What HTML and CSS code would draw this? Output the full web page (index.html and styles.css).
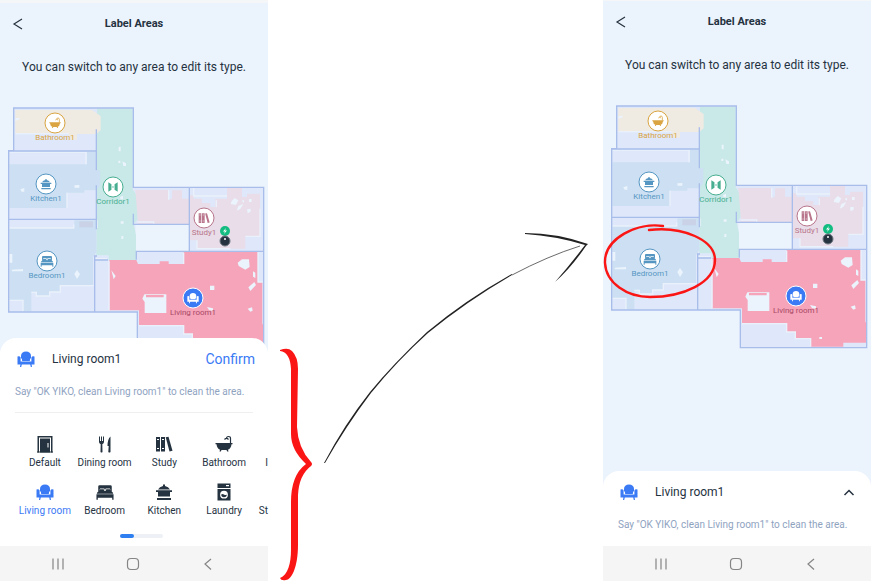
FILE: index.html
```html
<!DOCTYPE html>
<html lang="en">
<head>
  <meta charset="UTF-8">
  <meta name="viewport" content="width=device-width, initial-scale=1.0">
  <title>Label Areas</title>
  <link rel="stylesheet" href="styles.css">
</head>
<body>
  <!-- shared icons -->
  <svg class="sprite" width="0" height="0" aria-hidden="true">
    <symbol id="sofa" viewBox="0 0 18 18">
      <path d="M4 8V6C4 3 6 1.500 9 1.500S14 3 14 6V8Q12.800 8.500 12.800 11H5.200Q5.200 8.500 4 8z"/>
      <path d="M.5 6.500Q2.800 5.500 3.600 7.500V11.500H14.400V7.500Q15.200 5.500 17.500 6.500V14.500H14.600L15 17H13.800L13.200 14.500H4.800L4.200 17H3L3.400 14.500H.5z"/>
    </symbol>
    <symbol id="door" viewBox="0 0 18 18">
      <path d="M1.500 1H16.500V17.500H15V2.500H3V17.500H1.500z"/>
      <path fill-rule="evenodd" d="M4 3.500H14V17.500H4zM11.500 8V12.500H12.500V8z"/>
      <path d="M1 16.500H17V17.500H1z"/>
    </symbol>
    <symbol id="cutlery" viewBox="0 0 18 18">
      <path d="M3 1.500H4V6H5V1.500H6V6H7V1.500H8V7Q8 8.500 6.300 9.200L6.500 17Q5.500 18 4.500 17L4.700 9.200Q3 8.500 3 7z"/>
      <path d="M14.500 1.500V17Q13.500 18 12.300 17L12.700 11H11.500Q11.500 4 14.500 1.500z"/>
    </symbol>
    <symbol id="books" viewBox="0 0 18 18">
      <path fill-rule="evenodd" d="M1 2H5V16.500H1zM2 4V5H4V4zM2 13V14H4V13z"/>
      <path fill-rule="evenodd" d="M6 2H10V16.500H6zM7 4V5H9V4zM7 13V14H9V13z"/>
      <path d="M10.700 2.300L13.500 1.700L17.500 15.800L14.500 16.600z"/>
    </symbol>
    <symbol id="bath" viewBox="0 0 18 18">
      <path d="M.5 8H17.500V9.200H16.500Q16 13.500 13 14.800L13.500 16.500H12.200L11.500 15H6.500L5.800 16.500H4.500L5 14.800Q2 13.500 1.500 9.200H.5z"/>
      <path d="M15.500 8V3.500Q15.500 1.500 13.500 1.500T11.500 3.500M9.500 4.500Q11.500 2.200 13.500 4.500" fill="none" stroke="currentColor" stroke-width="1.200"/>
    </symbol>
    <symbol id="bed" viewBox="0 0 20 18">
      <path d="M2.500 8V3Q2.500 1.500 4 1.500H16Q17.500 1.500 17.500 3V8H16.500L15.500 5H10.800L10 7L9.200 5H4.500L3.500 8z"/>
      <path d="M1 10L4.500 6H8.500L9.500 8H10.500L11.500 6H15.500L19 10V11H1z"/>
      <path d="M.5 11.500H19.500V17.500H18V15.500H2V17.500H.5z"/>
    </symbol>
    <symbol id="pot" viewBox="0 0 18 18">
      <path d="M8 1.500H10V3Q13.500 3.500 15 6.500H3Q4.500 3.500 8 3z"/>
      <path d="M1 7.200H17V9H15V13.500H3V9H1zM2 15H16V17H2z"/>
    </symbol>
    <symbol id="washer" viewBox="0 0 18 18">
      <path d="M2.500.5H15.500V5H2.500zM11 2V3.300H14V2z" fill-rule="evenodd"/>
      <path fill-rule="evenodd" d="M2.500 6H15.500V17.500H2.500zM9 7.800A3.900 3.900 0 1 0 9 15.600A3.900 3.900 0 1 0 9 7.800z"/>
      <path d="M6.200 11.500Q7.500 10.500 9 11.500T11.800 11.500A2.800 2.800 0 0 1 6.200 11.500z"/>
    </symbol>
    <symbol id="doors" viewBox="0 0 18 18">
      <path d="M3 3L7 5.500V12.500L3 15zM15 3L11 5.500V12.500L15 15zM8 8.300H10V9.700H8z"/>
    </symbol>

    <!-- floor plan -->
    <symbol id="plan" viewBox="9 -30 804 795">
      <path class="floor" d="M50 18H409V256H800V743H421V630H35V146H50z"/>
      <path class="void" d="M415 368H577V448H415z"/>
      <path class="green" d="M300 20H407V262L422 285V352L410 366L417 400V474H335V460H298z"/>
      <path class="beige" d="M55 24H285L311 42V85L298 96H240V113H215V96H55z"/>
      <path class="blue" d="M37 187H270V150H298V205H310V250L298 265H262V272H210V318H37zM37 378H232V355H298V450L288 466V551H190V570H158V582H118V571H103V628H78V595H37z"/>
      <path class="pink" d="M415 264H515V293L525 290V265H555V290H575V280H590V290H615V303H640V315H655V290H690V258H735V285H750V275H789V403H745V440H600V415H577V367H422V352z"/>
      <path class="rose" d="M337 474H418L423 486H560V450H783V540H796V665L801 672V728H730V740H632V716H586V696H560V671H426V625H337z"/>
      <path class="grey" d="M247 358H288V376H247z"/>
      <path class="edge" d="M56 95H215M37 150H267V187M210 272V318M37 378H230V368M300 355V378M78 628V595H37M103 571H118V582H158V570H190V551H290M426 671H560V696H586V716H632V740M560 486V452M422 360H470V368M600 415V440H700M515 265V293M590 259V282H690M658 316V295M783 450V540H797M745 403H789V320M336 478V625M293 470H330"/>
      <path class="specks" d="M442 577H508V633H443V600L436 590zM722 482L735 472H756L758 495L745 503L725 492zM639 551H652V564H639zM754 556L772 540L777 549L760 567zM768 508L775 512V528L768 524zM630 615L648 619V627L636 624zM752 620L765 616L767 626L760 629zM343 505L356 522L350 532zM232 516L240 504L249 517L240 531zM44 503L78 501V508H45zM36 456H46V482H36zM70 262L82 258V269H74zM232 250L247 249V257H233zM365 134H371V148H365zM364 176H370V183H364zM376 178L387 184V192H379zM369 285L378 281V292H371zM371 358H380V365H371zM373 402H379V411H373zM55 49L68 47V52L56 56zM704 297L713 288L724 295L717 309L701 306zM734 297L741 293V302zM756 291H764V300H756zM724 312L739 306L730 321L719 326zM750 322L761 320V329L752 334zM658 711H666V717H658z"/>
      <path class="rose" d="M447 579H500V586H447zM488 478H515V488H488z"/>
      <path class="wall" d="M50 18H409V256H800V743H421V630H35V146H50zM35 147H298M298 82V205M298 250V382M35 352H298M293 630V462H300M293 474H333M409 335V367H577M577 256V448M418 473V448H800"/>
    </symbol>
  </svg>

  <main class="board">
    <section class="phone">
      <div class="status"></div>
      <header class="topbar">
        <button class="back" aria-label="Back"><svg viewBox="0 0 12 14"><path d="M10 2L2 7L10 12"/></svg></button>
        <h1>Label Areas</h1>
      </header>
      <p class="hint">You can switch to any area to edit its type.</p>

      <div class="map">
        <svg viewBox="0 90 268 265">
          <use href="#plan" x="0" y="90" width="268" height="265"/>
          <g class="pin bathroom" transform="translate(55 121)"><circle r="10"/><use href="#bath" x="-6" y="-6" width="12" height="12"/><text y="17">Bathroom1</text></g>
          <g class="pin kitchen" transform="translate(46 182)"><circle r="10"/><use href="#pot" x="-6" y="-6" width="12" height="12"/><text y="17">Kitchen1</text></g>
          <g class="pin corridor" transform="translate(113 185)"><circle r="10"/><use href="#doors" x="-7" y="-7" width="14" height="14"/><text y="17">Corridor1</text></g>
          <g class="pin study" transform="translate(204 216)"><circle r="10"/><use href="#books" x="-6" y="-6" width="12" height="12"/><text y="17">Study1</text></g>
          <g class="pin bedroom" transform="translate(47 259)"><circle r="10"/><use href="#bed" x="-7" y="-6" width="14" height="12"/><text y="17">Bedroom1</text></g>
          <g class="pin living" transform="translate(193 296)"><circle r="10"/><use href="#sofa" x="-6" y="-6" width="12" height="12"/><text y="17">Living room1</text></g>
          <g transform="translate(225 229)"><circle class="dock" r="5"/><path class="bolt" d="M1-3L-2 .5H0L-1 3L2-.5H0z"/></g>
          <g transform="translate(225 239)"><circle class="robot" r="5"/><circle class="lens" r="1" cy="-2"/></g>
        </svg>
      </div>

      <div class="sheet">
        <div class="sheet-head">
          <svg class="icon active"><use href="#sofa"/></svg>
          <h2>Living room1</h2>
          <button class="confirm">Confirm</button>
        </div>
        <p class="say">Say "OK YIKO, clean Living room1" to clean the area.</p>
        <hr>
        <div class="types">
          <button><svg class="icon"><use href="#door"/></svg>Default</button>
          <button><svg class="icon"><use href="#cutlery"/></svg>Dining room</button>
          <button><svg class="icon"><use href="#books"/></svg>Study</button>
          <button><svg class="icon"><use href="#bath"/></svg>Bathroom</button>
          <button class="next">I</button>
          <button class="active"><svg class="icon"><use href="#sofa"/></svg>Living room</button>
          <button><svg class="icon"><use href="#bed"/></svg>Bedroom</button>
          <button><svg class="icon"><use href="#pot"/></svg>Kitchen</button>
          <button><svg class="icon"><use href="#washer"/></svg>Laundry</button>
          <button class="next">St</button>
        </div>
        <div class="pager"><span></span></div>
      </div>

      <nav class="navbar">
        <button aria-label="Recent apps"><svg viewBox="0 0 14 14"><path d="M2 1.500V12.500M7 1.500V12.500M12 1.500V12.500"/></svg></button>
        <button aria-label="Home"><svg viewBox="0 0 14 14"><rect x="1.500" y="1.500" width="11" height="11" rx="3.500"/></svg></button>
        <button aria-label="Back"><svg viewBox="0 0 14 14"><path d="M10 2L4 7L10 12.500"/></svg></button>
      </nav>
    </section>

    <!-- brace and arrow between the two screens -->
    <svg class="notes" viewBox="268 0 335 581" aria-hidden="true">
      <path class="brace" d="M280 350Q288 347 292 351Q298 357 298 369L297 427Q298 448 311 462Q313 464 311 466Q299 475 298 495L298 545C298 568 291 580 286 580Q281 581 280 578C288 575 291 563 291 550V502Q291 475 306 464Q291 450 291 434V369Q290 352 280 351z"/>
      <path class="stroke" d="M324 463Q344 425 370 392Q393 364 427 332Q467 299 512 274L512 275Q467 301 428 333Q397 361 371 393Q346 426 325 463z"/>
      <path class="thin" d="M512 275Q548 256 580 246"/>
      <path class="stroke" d="M525 233Q557 233 588 244L586 246Q571 268 555 282Q570 265 585 245Q556 236 525 234z"/>
    </svg>

    <section class="phone">
      <div class="status slim"></div>
      <header class="topbar">
        <button class="back" aria-label="Back"><svg viewBox="0 0 12 14"><path d="M10 2L2 7L10 12"/></svg></button>
        <h1>Label Areas</h1>
      </header>
      <p class="hint">You can switch to any area to edit its type.</p>

      <div class="map">
        <svg viewBox="0 90 268 265">
          <use href="#plan" x="0" y="90" width="268" height="265"/>
          <g class="pin bathroom" transform="translate(55 121)"><circle r="10"/><use href="#bath" x="-6" y="-6" width="12" height="12"/><text y="17">Bathroom1</text></g>
          <g class="pin kitchen" transform="translate(46 182)"><circle r="10"/><use href="#pot" x="-6" y="-6" width="12" height="12"/><text y="17">Kitchen1</text></g>
          <g class="pin corridor" transform="translate(113 185)"><circle r="10"/><use href="#doors" x="-7" y="-7" width="14" height="14"/><text y="17">Corridor1</text></g>
          <g class="pin study" transform="translate(204 216)"><circle r="10"/><use href="#books" x="-6" y="-6" width="12" height="12"/><text y="17">Study1</text></g>
          <g class="pin bedroom" transform="translate(47 259)"><circle r="10"/><use href="#bed" x="-7" y="-6" width="14" height="12"/><text y="17">Bedroom1</text></g>
          <g class="pin living" transform="translate(193 296)"><circle r="10"/><use href="#sofa" x="-6" y="-6" width="12" height="12"/><text y="17">Living room1</text></g>
          <g transform="translate(225 229)"><circle class="dock" r="5"/><path class="bolt" d="M1-3L-2 .5H0L-1 3L2-.5H0z"/></g>
          <g transform="translate(225 239)"><circle class="robot" r="5"/><circle class="lens" r="1" cy="-2"/></g>
          <path class="ring" d="M60 226C35 222 1 238 2 263C3 283 24 297 47 297C80 297 112 283 112 260C112 240 80 226 46 230"/>
        </svg>
      </div>

      <div class="sheet">
        <div class="sheet-head">
          <svg class="icon active"><use href="#sofa"/></svg>
          <h2>Living room1</h2>
          <button class="expand" aria-label="Expand"><svg viewBox="0 0 12 12"><path d="M3 8L6 5L9 8"/></svg></button>
        </div>
        <p class="say">Say "OK YIKO, clean Living room1" to clean the area.</p>
      </div>

      <nav class="navbar">
        <button aria-label="Recent apps"><svg viewBox="0 0 14 14"><path d="M2 1.500V12.500M7 1.500V12.500M12 1.500V12.500"/></svg></button>
        <button aria-label="Home"><svg viewBox="0 0 14 14"><rect x="1.500" y="1.500" width="11" height="11" rx="3.500"/></svg></button>
        <button aria-label="Back"><svg viewBox="0 0 14 14"><path d="M10 2L4 7L10 12.500"/></svg></button>
      </nav>
    </section>
  </main>
</body>
</html>
```
FILE: styles.css
```css
* {
  box-sizing: border-box;
}
body {
  margin: 0;
  background: #fff;
  color: #25323f;
  font-family: Roboto, sans-serif;
}
h1, h2, p {
  margin: 0;
}
button {
  padding: 0;
  border: none;
  background: none;
  color: inherit;
  font-family: inherit;
  cursor: pointer;
}
svg {
  display: block;
}
.sprite {
  position: absolute;
}
.board {
  display: grid;
  grid-template-columns: 4fr 5fr 4fr;
  height: 100vh;
  padding-right: 1px;
}
.phone {
  display: flex;
  flex-direction: column;
  min-width: 0;
  min-height: 0;
  background: #ebf3fc;
}
.status {
  height: 3px;
  background: #f5f6f8;
}
.status.slim {
  height: 1px;
}
.topbar {
  display: grid;
  grid-template-columns: 24px 1fr 24px;
  align-items: center;
  height: 42px;
  padding: 0 12px;
}
.back svg {
  width: 12px;
  height: 14px;
  fill: none;
  stroke: #25323f;
  stroke-width: 1.2;
}
.topbar h1 {
  font-size: 11px;
  line-height: 16px;
  font-weight: 700;
  text-align: center;
}
.hint {
  padding: 14px 0 17px;
  font-size: 12px;
  line-height: 16px;
  text-align: center;
}

/* map */
.map {
  flex: 1;
  min-height: 0;
  overflow: hidden;
}
.map svg {
  width: 100%;
}
.floor { fill: #dfe8fb; }
.void { fill: #ebf3fc; }
.green { fill: #c8e9e7; }
.beige { fill: #efeae2; }
.blue { fill: #cde0f3; }
.pink { fill: #e8dde8; }
.rose { fill: #f6a4ba; }
.grey { fill: #c9d2e6; }
.specks { fill: #ebf3fc; }
.edge {
  fill: none;
  stroke: #eaf1fb;
  stroke-width: 4;
}
.wall {
  fill: none;
  stroke: #a8bdea;
  stroke-width: 4;
}
.pin circle {
  fill: #fff;
  stroke: currentColor;
}
.pin use {
  fill: currentColor;
}
.pin text {
  fill: currentColor;
  font-size: 8px;
  text-anchor: middle;
}
.bathroom { color: #d9a441; }
.kitchen, .bedroom { color: #5596c2; }
.corridor { color: #48ae91; }
.study { color: #b8758b; }
.living { color: #fff; }
.pin.living circle { fill: #3a7af5; }
.pin.living text { fill: #a84864; }
.dock { fill: #13bd82; }
.bolt, .lens { fill: #fff; }
.robot {
  fill: #25323f;
  stroke: #6c7680;
}
.ring {
  fill: none;
  stroke: #fb1616;
  stroke-width: 2.4;
  stroke-linecap: round;
}

/* bottom sheet */
.sheet {
  position: relative;
  margin-top: -16px;
  padding: 9px 0 8px;
  border-radius: 16px 16px 0 0;
  background: #fff;
}
.sheet-head {
  display: flex;
  align-items: center;
  height: 24px;
  padding: 0 13px 0 17px;
}
.icon {
  width: 18px;
  height: 18px;
  fill: currentColor;
}
.active {
  color: #3a7af5;
}
.sheet-head h2 {
  flex: 1;
  padding-left: 17px;
  font-size: 12px;
  line-height: 16px;
  font-weight: 400;
}
.confirm {
  color: #3a7af5;
  font-size: 14px;
  line-height: 16px;
}
.expand svg {
  width: 18px;
  height: 18px;
  fill: none;
  stroke: #25323f;
}
.say {
  margin-top: 13px;
  padding: 0 15px 5px;
  color: #8fa3bf;
  font-size: 10px;
  line-height: 16px;
  white-space: nowrap;
}
hr {
  height: 1px;
  margin: 7px 15px 0;
  border: none;
  background: #eeeff1;
}
.types {
  display: grid;
  grid-template-columns: repeat(4, 1fr) 14px;
  row-gap: 13px;
  padding: 22px 0 0 15px;
}
.types button {
  display: flex;
  flex-direction: column;
  align-items: center;
  justify-content: flex-end;
  gap: 3px;
  height: 35px;
  font-size: 10px;
  line-height: 14px;
  white-space: nowrap;
}
.types .next {
  align-items: flex-end;
}
.pager {
  width: 43px;
  height: 4px;
  margin: 16px 0 0 120px;
  border-radius: 2px;
  background: #edf1f6;
}
.pager span {
  display: block;
  width: 14px;
  height: 4px;
  border-radius: 2px;
  background: #2f7ff0;
}
.navbar {
  display: grid;
  grid-template-columns: repeat(3, 1fr);
  align-items: center;
  justify-items: center;
  flex-shrink: 0;
  height: 35px;
  padding: 0 23px 0 20px;
  background: #f5f5f5;
}
.navbar svg {
  width: 14px;
  height: 14px;
  fill: none;
  stroke: #858585;
  stroke-width: 1.2;
}

/* annotations */
.notes {
  width: 100%;
}
.brace {
  fill: #fb1616;
}
.stroke {
  fill: #222;
}
.thin {
  fill: none;
  stroke: #444;
  stroke-width: 0.8;
}
```
